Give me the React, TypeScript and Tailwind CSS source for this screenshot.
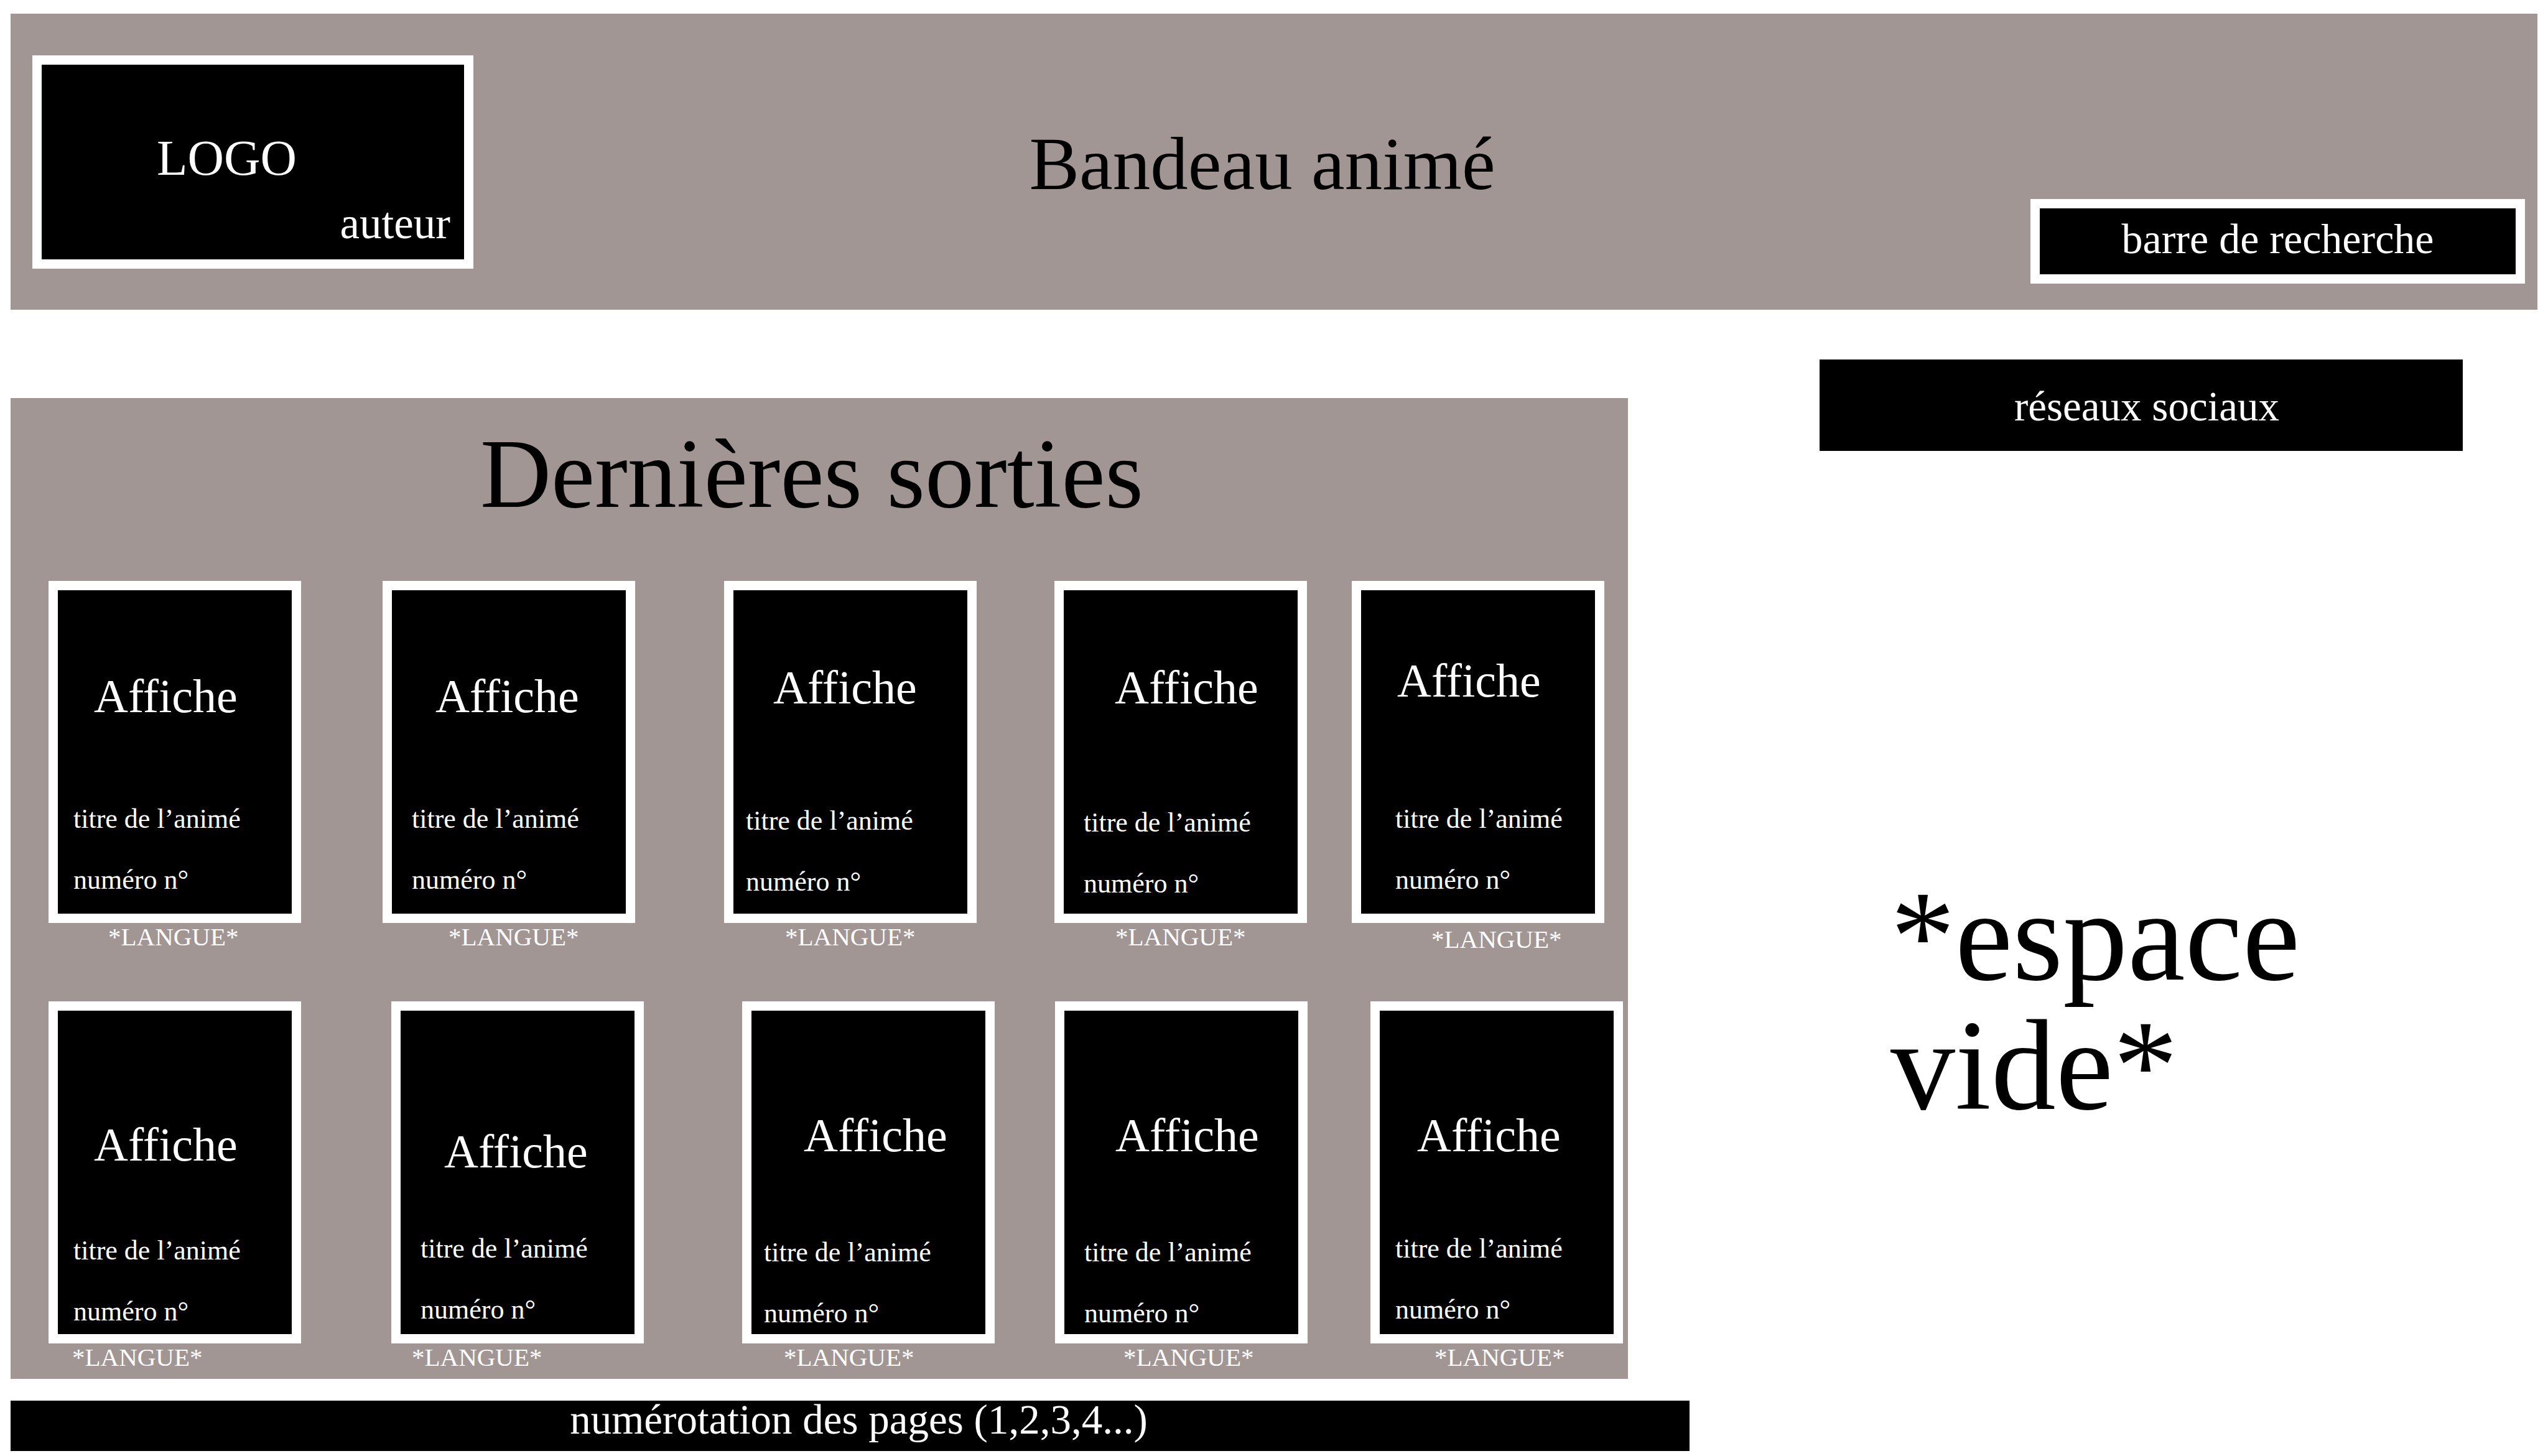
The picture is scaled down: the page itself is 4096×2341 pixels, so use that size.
type Card = {
  column: string;
  title: string;
  meta: string;
  language: string;
};

const firstRow: Card[] = [
  { column: "col-start-1", title: "pt-[126px] pl-[58px]", meta: "pb-[29px] pl-[25px]", language: "pl-[96px]" },
  { column: "col-start-3", title: "pt-[126px] pl-[70px]", meta: "pb-[29px] pl-[32px]", language: "pl-[106px]" },
  { column: "col-start-5", title: "pt-[112px] pl-[64px]", meta: "pb-[26px] pl-[20px]", language: "pl-[98px]" },
  { column: "col-start-7", title: "pt-[112px] pl-[82px]", meta: "pb-[23px] pl-[32px]", language: "pl-[98px]" },
  { column: "col-start-9", title: "pt-[101px] pl-[58px]", meta: "pb-[29px] pl-[55px]", language: "pl-[128px] pt-[4px]" },
];

const secondRow: Card[] = [
  { column: "col-start-1", title: "pt-[171px] pl-[58px]", meta: "pb-[11px] pl-[25px]", language: "pl-[38px]" },
  { column: "col-start-3", title: "pt-[182px] pl-[70px]", meta: "pb-[14px] pl-[32px]", language: "pl-[33px]" },
  { column: "col-start-5", title: "pt-[156px] pl-[84px]", meta: "pb-[8px] pl-[20px]", language: "pl-[67px]" },
  { column: "col-start-7", title: "pt-[156px] pl-[82px]", meta: "pb-[8px] pl-[32px]", language: "pl-[110px]" },
  { column: "col-start-9", title: "pt-[156px] pl-[60px]", meta: "pb-[14px] pl-[25px]", language: "pl-[103px]" },
];

function Poster({ card }: { card: Card }) {
  return (
    <article className={card.column}>
      <div className="flex min-h-[550px] flex-col justify-between border-[15px] border-white bg-black whitespace-nowrap">
        <h3 className={`text-[76px] leading-[88px] ${card.title}`}>Affiche</h3>
        <div className={`flex flex-col gap-12 text-[44px] leading-[50px] ${card.meta}`}>
          <p>titre de l’animé</p>
          <p>numéro n°</p>
        </div>
      </div>
      <p className={`-mb-1 h-[48px] text-[41px] leading-[44px] ${card.language}`}>*LANGUE*</p>
    </article>
  );
}

export default function App() {
  return (
    <div className="bg-white px-[17px] pt-[22px] pb-[9px] font-['Liberation_Serif',serif] text-black">
      <header className="grid grid-cols-[709fr_2503fr_795fr] items-start bg-[#a29694] pt-[67px] pr-[20px] pb-[42px] pl-[35px]">
        <div className="mb-6 border-[15px] border-white bg-black pt-[100px] pb-[18px] text-white">
          <p className="pl-[185px] text-[81px] leading-[100px]">LOGO</p>
          <p className="mt-[15px] pr-[22px] text-right text-[71px] leading-[80px]">auteur</p>
        </div>
        <h1 className="mt-[104px] pl-[33px] text-center text-[121px] leading-[140px]">Bandeau animé</h1>
        <form role="search" className="self-end">
          <input
            type="text"
            aria-label="barre de recherche"
            placeholder="barre de recherche"
            className="block h-[136px] w-full rounded-none border-[15px] border-white bg-black pb-[8px] text-center text-[68px] leading-[80px] text-white placeholder:text-white placeholder:opacity-100"
          />
        </form>
      </header>

      <div className="grid grid-cols-[2699fr_209fr_1034fr_120fr] items-start">
        <main className="pt-[142px]">
          <section className="mr-[99px] bg-[#a29694] pt-[42px] pb-[13px]">
            <h2 className="pr-[24px] text-center text-[158px] leading-[160px]">Dernières sorties</h2>
            <div className="mt-[92px] flex flex-col gap-[82px] text-white">
              <div className="grid grid-cols-[406fr_131fr_406fr_143fr_406fr_125fr_406fr_72fr_406fr] pr-[38px] pl-[61px]">
                {firstRow.map((card) => (
                  <Poster key={card.column} card={card} />
                ))}
              </div>
              <div className="grid grid-cols-[406fr_145fr_406fr_158fr_406fr_97fr_406fr_101fr_406fr] pr-[8px] pl-[61px]">
                {secondRow.map((card) => (
                  <Poster key={card.column} card={card} />
                ))}
              </div>
            </div>
          </section>
          <nav aria-label="pages" className="mt-[35px] bg-black pt-[1px] pb-[22px] pl-[28px] text-center text-[67px] leading-[58px] text-white">
            numérotation des pages (1,2,3,4...)
          </nav>
        </main>

        <aside className="col-start-3 pt-[80px]">
          <div className="bg-black pt-[38px] pb-[34px] pl-[18px] text-center text-[67px] leading-[75px] text-white">
            réseaux sociaux
          </div>
          <p className="mt-[676px] pl-[114px] text-[208px] leading-[208px]">
            *espace
            <br />
            vide*
          </p>
        </aside>
      </div>
    </div>
  );
}
